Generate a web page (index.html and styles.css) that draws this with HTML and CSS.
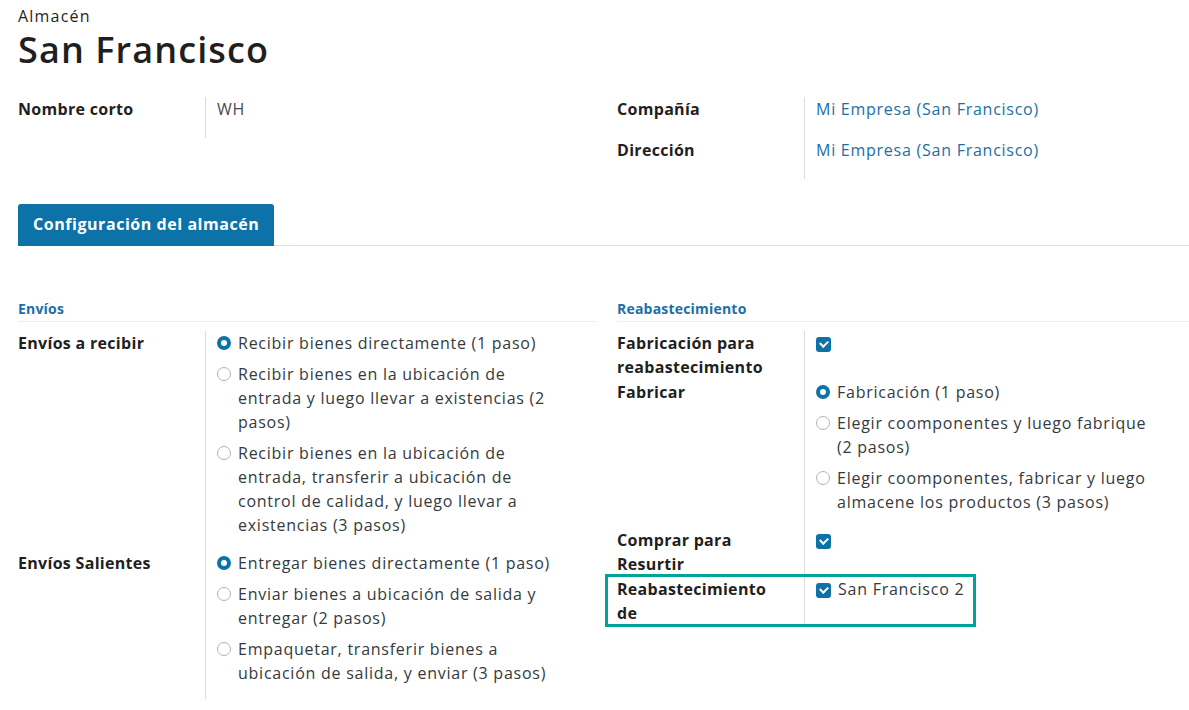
FILE: index.html
```html
<!DOCTYPE html>
<html lang="es">
<head>
<meta charset="utf-8">
<title>Almacén</title>
<link rel="stylesheet" href="styles.css">
</head>
<body>
<div class="sheet">
  <div class="title">
    <div class="subtitle">Almacén</div>
    <h1 class="name">San Francisco</h1>
  </div>

  <div class="cols top">
    <div class="group">
      <div class="row">
        <div class="label">Nombre corto</div>
        <div class="value"><span class="plain">WH</span></div>
      </div>
    </div>
    <div class="group">
      <div class="row">
        <div class="label">Compañía</div>
        <div class="value"><span class="link">Mi Empresa (San Francisco)</span></div>
      </div>
      <div class="row">
        <div class="label">Dirección</div>
        <div class="value"><span class="link">Mi Empresa (San Francisco)</span></div>
      </div>
    </div>
  </div>

  <div class="tabs">
    <div class="tab active">Configuración del almacén</div>
  </div>

  <div class="cols bottom">
    <div class="group left">
      <div class="sec">Envíos</div>
      <div class="row">
        <div class="label">Envíos a recibir</div>
        <div class="value options">
          <div class="opt"><span class="radio on"></span><span class="txt">Recibir bienes directamente (1 paso)</span></div>
          <div class="opt"><span class="radio"></span><span class="txt">Recibir bienes en la ubicación de entrada y luego llevar a existencias (2 pasos)</span></div>
          <div class="opt"><span class="radio"></span><span class="txt">Recibir bienes en la ubicación de entrada, transferir a ubicación de control de calidad, y luego llevar a existencias (3 pasos)</span></div>
        </div>
      </div>
      <div class="row">
        <div class="label">Envíos Salientes</div>
        <div class="value options">
          <div class="opt"><span class="radio on"></span><span class="txt">Entregar bienes directamente (1 paso)</span></div>
          <div class="opt"><span class="radio"></span><span class="txt">Enviar bienes a ubicación de salida y entregar (2 pasos)</span></div>
          <div class="opt"><span class="radio"></span><span class="txt">Empaquetar, transferir bienes a ubicación de salida, y enviar (3 pasos)</span></div>
        </div>
      </div>
    </div>

    <div class="group right">
      <div class="sec">Reabastecimiento</div>
      <div class="row tight">
        <div class="label">Fabricación para reabastecimiento</div>
        <div class="value"><span class="check"></span></div>
      </div>
      <div class="row">
        <div class="label">Fabricar</div>
        <div class="value options">
          <div class="opt"><span class="radio on"></span><span class="txt">Fabricación (1 paso)</span></div>
          <div class="opt"><span class="radio"></span><span class="txt">Elegir coomponentes y luego fabrique (2 pasos)</span></div>
          <div class="opt"><span class="radio"></span><span class="txt">Elegir coomponentes, fabricar y luego almacene los productos (3 pasos)</span></div>
        </div>
      </div>
      <div class="row tight">
        <div class="label">Comprar para Resurtir</div>
        <div class="value"><span class="check"></span></div>
      </div>
      <div class="row tight marked">
        <div class="label">Reabastecimiento de</div>
        <div class="value"><div class="opt"><span class="check"></span><span class="txt">San Francisco 2</span></div></div>
        <div class="highlight"></div>
      </div>
    </div>
  </div>
</div>
</body>
</html>
```

FILE: styles.css
```css
* { box-sizing: border-box; }
html, body { margin: 0; padding: 0; background: #fff; }
body {
  font-family: "Open Sans", "Noto Sans", sans-serif;
  font-size: 16px;
  letter-spacing: 0.75px;
  line-height: 24px;
  color: #212529;
}
.sheet { padding: 4px 0 0 18px; }

.subtitle { font-size: 16px; font-weight: 500; line-height: 24px; color: #1f1f1f; letter-spacing: 1.2px; }
.name { margin: 0; font-size: 36px; font-weight: 600; line-height: 44px; color: #1f1f1f; letter-spacing: 1.1px; }

.cols { display: grid; grid-template-columns: 579px 572px; column-gap: 20px; }
.top { margin-top: 25px; }

.row { display: grid; grid-template-columns: 187px 1fr; position: relative; }
.label { font-weight: 700; color: #1f1f1f; padding-right: 14px; letter-spacing: 0.3px; }
.value { border-left: 1px solid #dcdcdc; padding-left: 11px; }
.top .row { min-height: 41px; }
.plain { color: #4a4a4a; }
.link { color: #1b6fa8; }

.left .value { padding-right: 37px; }
.right .value { padding-right: 32px; }

.tabs { margin-top: 25px; border-bottom: 1px solid #dee2e6; display: flex; }
.tab {
  height: 42px; padding: 0 15px; line-height: 40px;
  font-weight: 700; color: #fff; background: #0c72a7;
  border-radius: 3px 3px 0 0; margin-bottom: -1px; letter-spacing: 0.55px;
}

.bottom { margin-top: 53px; }
.sec {
  font-size: 14px; font-weight: 700; color: #1b6fa8; line-height: 20px; letter-spacing: 0.2px;
  border-bottom: 1px solid #eceef0; padding-bottom: 2px; margin-bottom: 9px;
}
.options { padding-bottom: 7px; }
.opt { display: flex; align-items: flex-start; margin-bottom: 7px; }
.opt .txt { color: #343a40; }
.tight .value { padding-bottom: 1px; }
.tight .label { padding-bottom: 1px; }

.radio {
  flex: none; width: 14px; height: 14px; border-radius: 50%;
  border: 1px solid #aeb4ba; margin: 5px 7px 0 0; background: #fff;
}
.radio.on { border: 4.5px solid #0c72a7; background: #fff; }

.check {
  display: inline-block; flex: none; width: 15px; height: 15px; border-radius: 3px;
  background: #0c72a7; margin: 6px 7px 0 0; vertical-align: top; position: relative;
}
.check::after {
  content: ""; position: absolute; left: 4px; top: 3px; width: 6px; height: 4px;
  border-left: 2px solid #fff; border-bottom: 2px solid #fff; transform: rotate(-45deg);
}

.highlight {
  position: absolute; left: -12px; top: -3px; width: 371px; height: 53px;
  border: 3px solid #00a39a; pointer-events: none;
}
```
